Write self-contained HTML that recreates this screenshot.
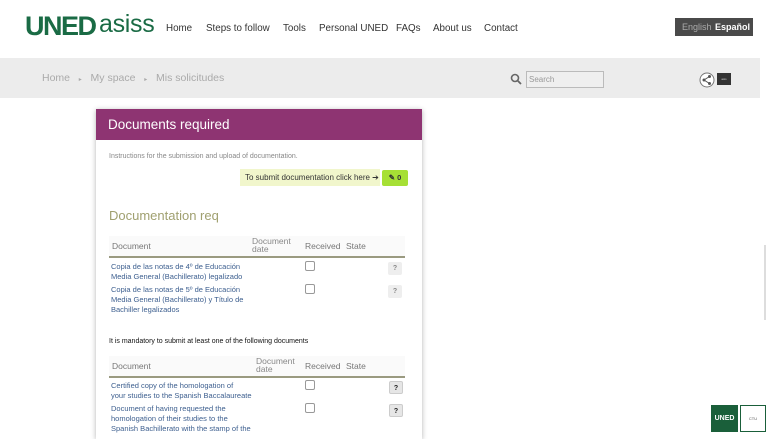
<!DOCTYPE html>
<html><head><meta charset="utf-8"><style>
*{margin:0;padding:0;box-sizing:border-box}
body{width:768px;height:432px;overflow:hidden;background:#fff;font-family:"Liberation Sans",sans-serif;position:relative}
.a{position:absolute;white-space:nowrap}
.nav{font-size:9.8px;color:#333;top:23px}
.t{font-size:7.5px;color:#3d5f8f;line-height:10px}
.h{font-size:8.5px;color:#777}
.hs{font-size:8.5px;color:#888;line-height:8px}
.cb{position:absolute;width:10px;height:10px;border:1px solid #999;border-radius:2px;background:#fff}
.q{position:absolute;width:14px;height:13px;background:#eee;border-radius:2px;font-size:7px;color:#888;text-align:center;line-height:13px;font-weight:bold}
.q2{background:#e6e6e6;border:1px solid #ccc;color:#222}
</style></head><body>
<div class="a" style="left:25px;top:11px;font-size:27px;font-weight:bold;color:#1a6b45;letter-spacing:-1.5px">UNED</div>
<div class="a" style="left:99px;top:10px;font-size:25px;color:#1a6b45;letter-spacing:-0.3px">asiss</div>
<div class="a nav" style="left:166px">Home</div>
<div class="a nav" style="left:206px">Steps to follow</div>
<div class="a nav" style="left:283px">Tools</div>
<div class="a nav" style="left:319px">Personal UNED</div>
<div class="a nav" style="left:396px">FAQs</div>
<div class="a nav" style="left:433px">About us</div>
<div class="a nav" style="left:484px">Contact</div>
<div class="a" style="left:675px;top:18px;width:78px;height:18px;background:#4a4a4a;font-size:9px;line-height:18px;padding-left:7px;color:#aaa">English <b style="color:#fff;margin-left:1px">Español</b></div>
<div class="a" style="left:0;top:58px;width:760px;height:40px;background:#ececec"></div>
<div class="a" style="left:42px;top:72px;font-size:10.5px;color:#aaa">Home &nbsp; <span style="font-size:6px">▸</span> &nbsp; My space &nbsp; <span style="font-size:6px">▸</span> &nbsp; Mis solicitudes</div>
<svg class="a" style="left:510px;top:73px" width="12" height="12"><circle cx="5" cy="5" r="3.5" stroke="#666" stroke-width="1.6" fill="none"/><line x1="7.5" y1="7.5" x2="11" y2="11" stroke="#666" stroke-width="1.8"/></svg>
<div class="a" style="left:526px;top:71px;width:78px;height:17px;border:1px solid #bbb;background:#efefef;font-size:8px;color:#999;padding:3px 2px">Search</div>
<svg class="a" style="left:699px;top:72px" width="16" height="16"><circle cx="8" cy="8" r="7" fill="#fff" stroke="#777"/><circle cx="10.5" cy="4.5" r="1.5" fill="#555"/><circle cx="10.5" cy="11.5" r="1.5" fill="#555"/><circle cx="5" cy="8" r="1.5" fill="#555"/><path d="M10.5 4.5L5 8L10.5 11.5" stroke="#555" fill="none"/></svg>
<div class="a" style="left:717px;top:73px;width:14px;height:12px;background:#333;font-size:3px;color:#ccc;text-align:center;line-height:12px">asis</div>
<div class="a" style="left:96px;top:109px;width:326px;height:330px;background:#fff;box-shadow:0 1px 5px rgba(0,0,0,.3)"></div>
<div class="a" style="left:96px;top:109px;width:326px;height:31px;background:#8e3472;color:#fff;font-size:13.5px;line-height:32px;padding-left:12px">Documents required</div>
<div class="a" style="left:109px;top:153px;font-size:7px;color:#888">Instructions for the submission and upload of documentation.</div>
<div class="a" style="left:240px;top:169px;width:140px;height:17px;background:#f1f6cc;font-size:8px;color:#333;line-height:17px;padding-left:5px">To submit documentation click here ➔</div>
<div class="a" style="left:382px;top:170px;width:26px;height:16px;background:#a6e035;border-radius:2px;font-size:7.5px;font-weight:bold;color:#333;line-height:16px;text-align:center">✎ 0</div>
<div class="a" style="left:109px;top:208px;font-size:13px;color:#a0a070">Documentation req</div>
<div class="a" style="left:109px;top:236px;width:296px;height:22px;border-bottom:2px solid #9a9a80;background:#fafafa"></div>
<div class="a h" style="left:112px;top:241px">Document</div>
<div class="a hs" style="left:252px;top:237px">Document<br>date</div>
<div class="a h" style="left:305px;top:241px">Received</div>
<div class="a h" style="left:346px;top:241px">State</div>
<div class="a t" style="left:111px;top:262px">Copia de las notas de 4º de Educación<br>Media General (Bachillerato) legalizado</div>
<div class="cb" style="left:305px;top:261px"></div><div class="q" style="left:388px;top:262px">?</div>
<div class="a t" style="left:111px;top:285px">Copia de las notas de 5º de Educación<br>Media General (Bachillerato) y Título de<br>Bachiller legalizados</div>
<div class="cb" style="left:305px;top:284px"></div><div class="q" style="left:388px;top:285px">?</div>
<div class="a" style="left:109px;top:338px;font-size:7px;color:#111">It is mandatory to submit at least one of the following documents</div>
<div class="a" style="left:109px;top:356px;width:296px;height:22px;border-bottom:2px solid #9a9a80;background:#fafafa"></div>
<div class="a h" style="left:112px;top:361px">Document</div>
<div class="a hs" style="left:256px;top:357px">Document<br>date</div>
<div class="a h" style="left:305px;top:361px">Received</div>
<div class="a h" style="left:346px;top:361px">State</div>
<div class="a t" style="left:111px;top:381px">Certified copy of the homologation of<br>your studies to the Spanish Baccalaureate</div>
<div class="cb" style="left:305px;top:380px"></div><div class="q q2" style="left:389px;top:381px">?</div>
<div class="a t" style="left:111px;top:404px">Document of having requested the<br>homologation of their studies to the<br>Spanish Bachillerato with the stamp of the</div>
<div class="cb" style="left:305px;top:403px"></div><div class="q q2" style="left:389px;top:404px">?</div>
<div class="a" style="left:711px;top:405px;width:27px;height:27px;background:#1a5f3a;color:#fff;font-size:7px;font-weight:bold;text-align:center;line-height:27px">UNED</div>
<div class="a" style="left:740px;top:405px;width:26px;height:27px;border:1px solid #1a5f3a;font-size:4px;color:#555;text-align:center;line-height:25px">CTU</div>
<div class="a" style="left:764px;top:245px;width:2px;height:75px;background:#ddd"></div>
</body></html>
